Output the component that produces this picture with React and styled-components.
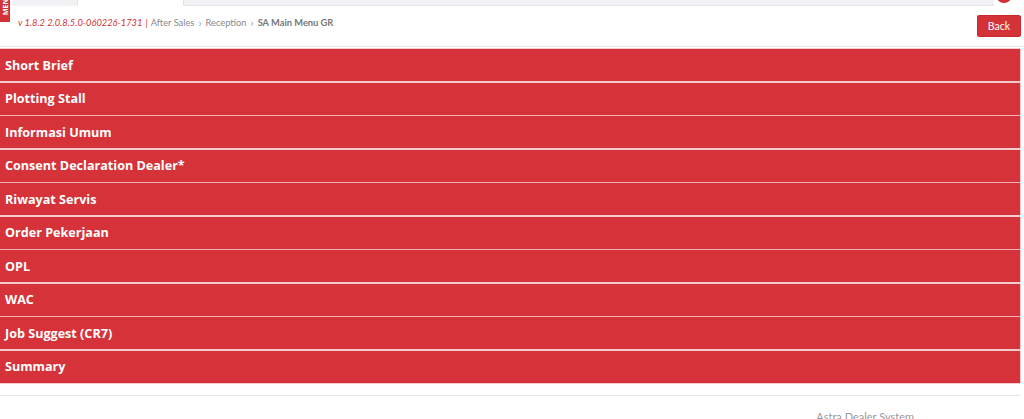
import React from 'react'
import styled, { createGlobalStyle } from 'styled-components'

const menuItems = [
  'Short Brief',
  'Plotting Stall',
  'Informasi Umum',
  'Consent Declaration Dealer*',
  'Riwayat Servis',
  'Order Pekerjaan',
  'OPL',
  'WAC',
  'Job Suggest (CR7)',
  'Summary'
]

const crumbs = ['After Sales', 'Reception']

const App = () => {
  return (
    <>
      <GlobalStyle />
      <Page>
        <MenuTab>MENU</MenuTab>
        <TopStrip>
          <TabBox />
          <TabGap />
          <SearchBar />
          <Avatar />
        </TopStrip>

        <Header>
          <Breadcrumb>
            <Version>v 1.8.2 2.0.8.5.0-060226-1731</Version>
            <Pipe>|</Pipe>
            {crumbs.map((c) => (
              <React.Fragment key={c}>
                <Crumb>{c}</Crumb>
                <Chevron>›</Chevron>
              </React.Fragment>
            ))}
            <Current>SA Main Menu GR</Current>
          </Breadcrumb>
          <BackButton>Back</BackButton>
        </Header>

        <PanelList>
          {menuItems.map((item) => (
            <PanelRow key={item}>{item}</PanelRow>
          ))}
        </PanelList>

        <Footer>
          <FooterText>Astra Dealer System</FooterText>
        </Footer>
      </Page>
    </>
  )
}

const GlobalStyle = createGlobalStyle`
  html, body {
    margin: 0;
    padding: 0;
    background: #fff;
    overflow: hidden;
  }
`

const Page = styled.div`
  position: relative;
  width: 1024px;
  height: 419px;
  font-family: Lato, 'Open Sans', sans-serif;
`

const MenuTab = styled.div`
  position: absolute;
  left: 0;
  top: -14px;
  width: 10px;
  height: 36px;
  background: #d33237;
  color: #fff;
  font-family: 'Open Sans', sans-serif;
  font-weight: 700;
  font-size: 7px;
  writing-mode: vertical-rl;
  transform: rotate(180deg);
  display: flex;
  align-items: center;
  justify-content: center;
  border-radius: 0 0 3px 3px;
  z-index: 2;
`

const TopStrip = styled.div`
  display: flex;
  height: 6px;
`

const TabBox = styled.div`
  margin-left: 12px;
  width: 65px;
  background: #f2f2f4;
  border-right: 1px solid #e3e3e6;
`

const TabGap = styled.div`
  width: 105px;
`

const SearchBar = styled.div`
  flex: 1;
  background: #f2f2f4;
  border-bottom: 1px solid #e3e3e6;
  border-left: 1px solid #e3e3e6;
`

const Avatar = styled.div`
  width: 16px;
  height: 16px;
  margin: -13px 12px 0 2px;
  border-radius: 50%;
  background: #d33237;
`

const Header = styled.div`
  display: flex;
  justify-content: space-between;
  align-items: center;
  height: 41px;
  padding: 0 3px 0 18px;
  border-bottom: 1px solid #e6e6e6;
  box-sizing: border-box;
`

const Breadcrumb = styled.div`
  display: flex;
  align-items: center;
  font-size: 9.3px;
  color: #8a8a8a;
  margin-top: -7px;
`

const Version = styled.span`
  color: #d33237;
  font-style: italic;
`

const Pipe = styled.span`
  color: #d33237;
  margin: 0 3px;
`

const Crumb = styled.span``

const Chevron = styled.span`
  margin: 0 4px;
  font-size: 11px;
  color: #999;
`

const Current = styled.span`
  font-weight: 700;
  color: #777;
`

const BackButton = styled.button`
  width: 44px;
  height: 22px;
  background: #d33237;
  color: #fff;
  border: 1px solid #c92a30;
  border-radius: 2px;
  font-family: Lato, sans-serif;
  font-size: 10.5px;
  padding: 0;
`

const PanelList = styled.div`
  display: flex;
  flex-direction: column;
  gap: 1.5px;
  width: 1020px;
  padding-top: 2px;
  padding-bottom: 12px;
  border-bottom: 1px solid #e6e6e6;
`

const PanelRow = styled.div`
  height: 32px;
  display: flex;
  align-items: center;
  padding-left: 5px;
  background: #d53339;
  box-shadow: 0 0 0 0.5px #e79a9d;
  color: #fff;
  font-family: 'Open Sans', sans-serif;
  font-weight: 700;
  font-size: 12.6px;
`

const Footer = styled.div`
  display: flex;
  justify-content: flex-end;
  padding: 14px 110px 0 0;
`

const FooterText = styled.span`
  font-size: 11px;
  color: #999;
`

export default App
